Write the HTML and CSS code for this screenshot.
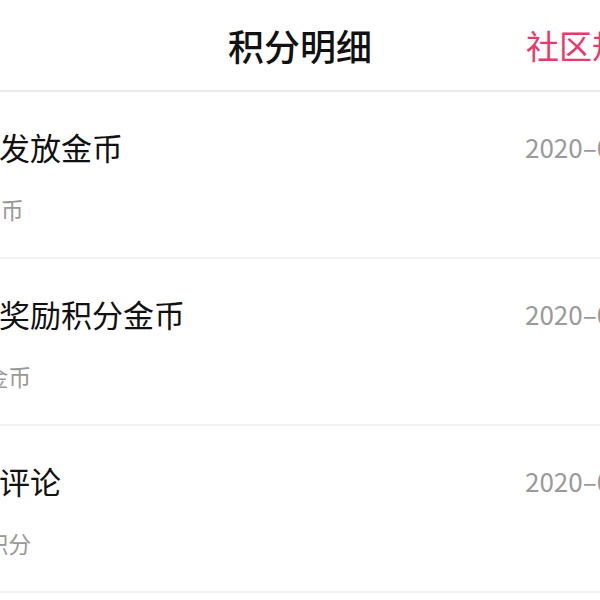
FILE: index.html
```html
<!DOCTYPE html>
<html lang="zh-CN">
<head>
    <meta charset="UTF-8">
    <meta name="viewport" content="width=device-width, initial-scale=1.0">
    <title>积分明细</title>
    <link rel="stylesheet" href="styles.css">
</head>
<body>

    <div class="header">
        <div class="header-title">积分明细</div>
        <div class="header-link">社区规则</div>
    </div>

    <div class="list">
        <div class="item">
            <div class="item-main">
                <div class="item-title">每日发放金币</div>
                <div class="item-desc">+5 金币</div>
            </div>
            <div class="item-date">2020–05–20 10:30</div>
        </div>
        <div class="item">
            <div class="item-main">
                <div class="item-title">签到奖励积分金币</div>
                <div class="item-desc">+10金币</div>
            </div>
            <div class="item-date">2020–05–19 09:12</div>
        </div>
        <div class="item">
            <div class="item-main">
                <div class="item-title">发表评论</div>
                <div class="item-desc">+10积分</div>
            </div>
            <div class="item-date">2020–05–18 21:45</div>
        </div>
        <div class="item">
            <div class="item-main">
                <div class="item-title">每日发放金币</div>
                <div class="item-desc">+5 金币</div>
            </div>
            <div class="item-date">2020–05–18 10:30</div>
        </div>
    </div>

</body>
</html>
```

FILE: styles.css
```css
body {
    margin: 0;
    font-family: "Noto Sans CJK SC", "Noto Sans", sans-serif;
    background-color: #ffffff;
    color: #111111;
    overflow: hidden;
    height: 600px;
}

.header {
    height: 90px;
    border-bottom: 2px solid #ebebeb;
    display: flex;
    align-items: center;
    justify-content: center;
    position: relative;
}

.header-title {
    font-size: 36px;
    font-weight: 500;
    line-height: 50px;
}

/* right-hand link, runs past the edge */
.header-link {
    position: absolute;
    left: 526px;
    top: 20px;
    font-size: 33px;
    line-height: 50px;
    color: #e9386b;
    white-space: nowrap;
}

.list {
    margin-left: -63px;
    width: 900px;
}

.item {
    display: flex;
    padding: 34px 0 31px;
    border-bottom: 2px solid #f2f2f2;
}

.item-main {
    width: 588px;
    flex: none;
}

.item-title {
    font-size: 31px;
    line-height: 42px;
    white-space: nowrap;
}

.item-desc {
    margin-top: 24px;
    margin-left: 10px;
    font-size: 23px;
    line-height: 34px;
    color: #999999;
    white-space: nowrap;
}

.item-date {
    font-size: 26px;
    line-height: 42px;
    color: #9a9a9a;
    white-space: nowrap;
}
```
